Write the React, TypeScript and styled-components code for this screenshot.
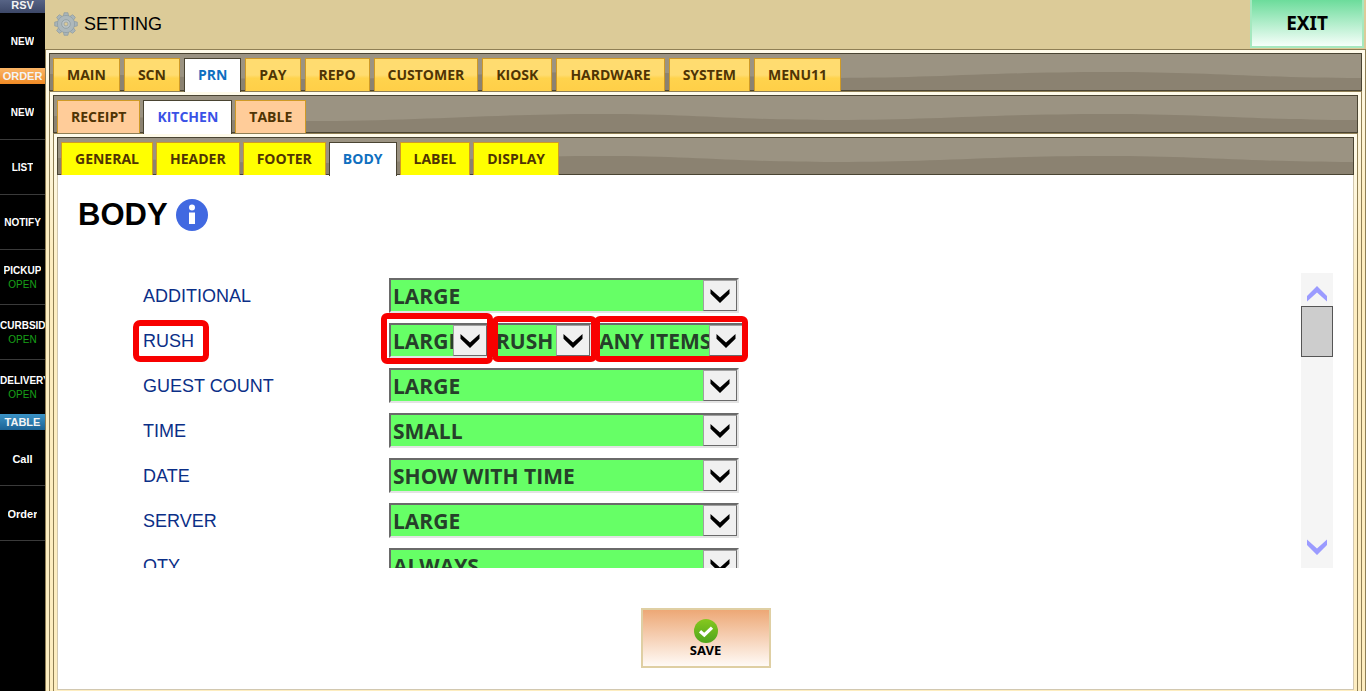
import React from "react";
import styled, { createGlobalStyle, css } from "styled-components";

const Global = createGlobalStyle`
  * { box-sizing: border-box; }
  html, body { margin: 0; height: 100%; }
  body { background: #fff; overflow: hidden; font-family: "Liberation Sans", Arial, sans-serif; color: #000; }
  #root { height: 100%; }
  button { font: inherit; cursor: pointer; }
`;

const Page = styled.div`
  display: grid;
  grid-template-columns: 45px minmax(0, 1fr);
  grid-template-rows: minmax(0, 1fr);
  height: 100%;
`;

const Sidebar = styled.nav`
  background: #000;
  overflow: hidden;
  margin-top: -3px;
`;

const headTone = {
  reserve: "linear-gradient(#5d6a8c, #3c4767)",
  order: "linear-gradient(#fbb566, #f08a24)",
  table: "linear-gradient(#3b93c6, #1b6294)",
};

const SideHead = styled.h2<{ $tone: keyof typeof headTone }>`
  margin: 0;
  height: 16px;
  font-size: 11px;
  line-height: 16px;
  font-weight: bold;
  text-align: center;
  color: #f4f4f4;
  background: ${(p) => headTone[p.$tone]};
`;

const SideItem = styled.button<{ $first?: boolean; $large?: boolean }>`
  display: flex;
  flex-direction: column;
  align-items: center;
  justify-content: center;
  width: 100%;
  height: 55px;
  padding: 1px 0 0;
  border: 0;
  border-top: 1px solid ${(p) => (p.$first ? "#000" : "#3a3a3a")};
  background: #000;
  color: #fff;
  overflow: hidden;
  && { font: bold ${(p) => (p.$large ? 11 : 10)}px/14px "Liberation Sans", Arial, sans-serif; }
`;

const SideLabel = styled.span`
  max-width: 100%;
  overflow: hidden;
  white-space: nowrap;
`;

const OpenNote = styled.span`
  color: #18a018;
  font-weight: normal;
`;

const SideEnd = styled.div`
  border-top: 1px solid #3a3a3a;
`;

const Main = styled.main`
  display: flex;
  flex-direction: column;
  min-width: 0;
  min-height: 0;
`;

const TitleBar = styled.header`
  display: flex;
  justify-content: space-between;
  height: 49px;
  flex: none;
  padding: 0 2px 0 9px;
  background: #dccb98;
`;

const Title = styled.h1`
  display: flex;
  align-items: center;
  gap: 6px;
  margin: 0;
  height: 48px;
  font-size: 18px;
  font-weight: normal;
`;

const ExitButton = styled.button`
  width: 114px;
  height: 48px;
  border: 2px solid #a6e8bf;
  border-top: 0;
  background: linear-gradient(#6cdc9b, #f6fffa);
  && { font: bold 19px/24px "Noto Sans", sans-serif; }
`;

const Frame = styled.section`
  display: flex;
  flex-direction: column;
  flex: 1;
  min-height: 0;
  padding: 3px 3px 0;
  border: 1px solid #8f7f55;
  border-bottom: 0;
  background: linear-gradient(#fffbea, #fdedc0 160px);
`;

const Strip = styled.div<{ $gap: number }>`
  position: relative;
  display: flex;
  flex: none;
  gap: ${(p) => p.$gap}px;
  height: 38px;
  padding: 4px 3px 0;
  border: 1px solid #4a4432;
  background: #8b8271;
`;

const Sheen = styled.svg`
  position: absolute;
  inset: 0;
  width: 100%;
  height: 100%;
`;

const tone = {
  gold: css`background: linear-gradient(#ffdc70 0 50%, #ffd34d 60%, #ffcf48);`,
  peach: css`background: #ffcc99;`,
  yellow: css`background: #ffff00;`,
};

const Tab = styled.button<{ $tone: keyof typeof tone; $active: boolean; $ink: string }>`
  position: relative;
  height: 33px;
  padding: 0 13px;
  border: 1px solid #cf9a26;
  border-bottom: 0;
  color: #4f3404;
  white-space: nowrap;
  ${(p) => tone[p.$tone]}
  && { font: bold 14px/32px "Open Sans", sans-serif; }
  ${(p) => p.$active && css<{ $ink: string }>`
    height: 34px;
    padding-bottom: 1px;
    background: #fff;
    border-color: #4a4432;
    color: ${(q) => q.$ink};
  `}
`;

const Content = styled.section`
  flex: 1;
  display: flex;
  flex-direction: column;
  min-height: 0;
  margin-bottom: 1px;
  padding: 19px 20px 21px;
  border: 1px solid #d2c8b0;
  border-top: 0;
  background: #fff;
`;

const Heading = styled.h2`
  display: flex;
  align-items: center;
  flex: none;
  gap: 8px;
  margin: 0;
  height: 42px;
  font-size: 31px;
  line-height: 42px;
`;

const InfoButton = styled.button`
  display: flex;
  padding: 0;
  border: 0;
  background: none;
`;

const ScrollArea = styled.div`
  flex: 1;
  display: flex;
  justify-content: space-between;
  min-height: 0;
  margin-top: 37px;
  overflow: hidden;
`;

const Rows = styled.div`
  padding-left: 61px;
`;

const Row = styled.div`
  display: grid;
  grid-template-columns: 250px 370px;
  align-items: center;
  height: 45px;
`;

const Mark = css`
  outline: 6px solid #f80000;
  border-radius: 1px;
`;

const Label = styled.label<{ $marked?: boolean }>`
  justify-self: start;
  padding: 0 9px 0 4px;
  font-size: 18px;
  line-height: 30px;
  color: #0b2f87;
  ${(p) => p.$marked && Mark}
`;

const Fields = styled.div`
  display: flex;
  gap: 3px;
`;

const SelectBox = styled.div<{ $width: number }>`
  position: relative;
  width: ${(p) => p.$width}px;
  height: 35px;
`;

const Select = styled.select`
  appearance: none;
  width: 100%;
  height: 35px;
  padding: 1px 34px 0 2px;
  border: 2px solid #6a6a6a;
  border-right-color: #e3e3e3;
  border-bottom-color: #e3e3e3;
  border-radius: 0;
  background: #66ff66;
  color: #26402a;
  overflow: hidden;
  white-space: nowrap;
  text-overflow: clip;
  font: bold 21px/30px "Open Sans", sans-serif;
`;

const Arrow = styled.span`
  position: absolute;
  top: 2px;
  right: 2px;
  display: grid;
  place-items: center;
  width: 34px;
  height: 31px;
  border: 1px solid #a0a0a0;
  border-right-color: #6a6a6a;
  border-bottom-color: #6a6a6a;
  background: #f0f0f0;
  pointer-events: none;
`;

const Highlight = styled.span<{ $inset: string }>`
  position: absolute;
  inset: ${(p) => p.$inset};
  border: 6px solid #f80000;
  border-radius: 6px;
  pointer-events: none;
`;

const ScrollBar = styled.div`
  display: flex;
  flex-direction: column;
  width: 32px;
  background: #f5f5f5;
`;

const ScrollButton = styled.button`
  display: flex;
  justify-content: center;
  align-items: center;
  height: 33px;
  padding: 8px 0 0;
  border: 0;
  background: none;
  &:last-child { padding: 0 0 10px; }
`;

const Thumb = styled.div`
  height: 51px;
  margin-bottom: auto;
  border: 1px solid #555;
  background: #cdcdcd;
`;

const Actions = styled.div`
  display: flex;
  justify-content: center;
  flex: none;
  margin-top: 40px;
`;

const SaveButton = styled.button`
  display: flex;
  flex-direction: column;
  align-items: center;
  width: 130px;
  height: 60px;
  padding: 9px 0 0;
  border: 2px solid #dfcfa3;
  background: linear-gradient(#eda876, #fffaf6);
  && { font: bold 13px/14px "Noto Sans", sans-serif; }
`;

function Gear() {
  return (
    <svg width="24" height="24" viewBox="0 0 24 24" aria-hidden="true">
      <g fill="#a9b5b9" stroke="#8d9ba0" strokeWidth="0.7">
        {[0, 45, 90, 135, 180, 225, 270, 315].map((a) => (
          <path key={a} d="M9.2 5 10.1 .7h3.8l.9 4.3z" transform={`rotate(${a} 12 12)`} />
        ))}
        <circle cx="12" cy="12" r="8.6" />
      </g>
      <circle cx="12" cy="12" r="8" fill="#adb8bb" />
      <circle cx="12" cy="12" r="4.3" fill="#bcc5c7" stroke="#8d9ba0" strokeWidth="0.8" />
      <circle cx="12" cy="12" r="2" fill="#dccb98" stroke="#8a9699" strokeWidth="0.6" />
    </svg>
  );
}

function Wave() {
  return (
    <Sheen viewBox="0 0 1300 36" preserveAspectRatio="none" aria-hidden="true">
      <path
        fill="#9b9382"
        d="M0 0H1300V24C1200 24 1150 18 1050 18C940 18 880 24 780 24C680 24 640 18 546 18C430 18 370 25 252 25C150 25 90 20 0 20Z"
      />
    </Sheen>
  );
}

function Chevron() {
  return (
    <svg width="20" height="14" viewBox="0 0 20 14" aria-hidden="true">
      <path d="M0.5 0 10 8.5 19.5 0V4.8L10 14 0.5 4.8Z" fill="#000" />
    </svg>
  );
}

function ScrollChevron({ up }: { up?: boolean }) {
  return (
    <svg width="20" height="16" viewBox="0 0 20 16" aria-hidden="true">
      <path d={up ? "M0 10 10 0 20 10V15.5L10 6.5 0 15.5Z" : "M0 .5 10 9.5 20 .5V6L10 16 0 6Z"} fill="#9b9bff" />
    </svg>
  );
}

type TabsProps = { items: string[]; active: string; tone: keyof typeof tone; ink?: string; gap?: number };

function Tabs({ items, active, tone: t, ink = "#0f6fc0", gap = 3 }: TabsProps) {
  return (
    <Strip role="tablist" $gap={gap}>
      <Wave />
      {items.map((name) => (
        <Tab key={name} role="tab" aria-selected={name === active} $tone={t} $active={name === active} $ink={ink}>
          {name}
        </Tab>
      ))}
    </Strip>
  );
}

type Field = { value: string; width: number; mark?: string };
type Setting = { label: string; fields: Field[]; marked?: boolean };

const one = (label: string, value: string): Setting => ({ label, fields: [{ value, width: 350 }] });

const settings: Setting[] = [
  one("ADDITIONAL", "LARGE"),
  {
    label: "RUSH",
    marked: true,
    fields: [
      { value: "LARGE", width: 100, mark: "-10px -4px -6px -8px" },
      { value: "RUSH", width: 100, mark: "-7px -5px -4px 0" },
      { value: "ANY ITEMS", width: 150, mark: "-7px -3px -4px -1px" },
    ],
  },
  one("GUEST COUNT", "LARGE"),
  one("TIME", "SMALL"),
  one("DATE", "SHOW WITH TIME"),
  one("SERVER", "LARGE"),
  one("QTY", "ALWAYS"),
];

function SettingRow({ label, fields, marked }: Setting) {
  return (
    <Row>
      <Label htmlFor={`${label}-0`} $marked={marked}>{label}</Label>
      <Fields>
        {fields.map((f, i) => (
          <SelectBox key={f.value} $width={f.width}>
            <Select id={`${label}-${i}`} aria-label={label} defaultValue={f.value}>
              <option>{f.value}</option>
            </Select>
            <Arrow><Chevron /></Arrow>
            {f.mark && <Highlight $inset={f.mark} />}
          </SelectBox>
        ))}
      </Fields>
    </Row>
  );
}

type EntryProps = { name: string; open?: boolean; first?: boolean; large?: boolean };

function SideEntry({ name, open, first, large }: EntryProps) {
  return (
    <SideItem $first={first} $large={large}>
      <SideLabel>{name}</SideLabel>
      {open && <OpenNote>OPEN</OpenNote>}
    </SideItem>
  );
}

export default function App() {
  return (
    <Page>
      <Global />
      <Sidebar>
        <SideHead $tone="reserve">RSV</SideHead>
        <SideEntry name="NEW" first />
        <SideHead $tone="order">ORDER</SideHead>
        <SideEntry name="NEW" first />
        <SideEntry name="LIST" />
        <SideEntry name="NOTIFY" />
        <SideEntry name="PICKUP" open />
        <SideEntry name="CURBSIDE" open />
        <SideEntry name="DELIVERY" open />
        <SideHead $tone="table">TABLE</SideHead>
        <SideEntry name="Call" first large />
        <SideEntry name="Order" large />
        <SideEnd />
      </Sidebar>
      <Main>
        <TitleBar>
          <Title><Gear />SETTING</Title>
          <ExitButton>EXIT</ExitButton>
        </TitleBar>
        <Frame>
          <Tabs
            items={["MAIN", "SCN", "PRN", "PAY", "REPO", "CUSTOMER", "KIOSK", "HARDWARE", "SYSTEM", "MENU11"]}
            active="PRN"
            tone="gold"
            gap={4}
          />
          <Frame>
            <Tabs items={["RECEIPT", "KITCHEN", "TABLE"]} active="KITCHEN" tone="peach" ink="#3a52e6" />
            <Frame>
              <Tabs items={["GENERAL", "HEADER", "FOOTER", "BODY", "LABEL", "DISPLAY"]} active="BODY" tone="yellow" />
              <Content>
                <Heading>
                  BODY
                  <InfoButton aria-label="Information">
                    <svg width="32" height="32" viewBox="0 0 32 32" aria-hidden="true">
                      <circle cx="16" cy="16" r="16" fill="#4169e1" />
                      <circle cx="16" cy="8.5" r="3" fill="#fff" />
                      <path d="M13 13.5h6V25h-6z" fill="#fff" />
                    </svg>
                  </InfoButton>
                </Heading>
                <ScrollArea>
                  <Rows>
                    {settings.map((s) => <SettingRow key={s.label} {...s} />)}
                  </Rows>
                  <ScrollBar>
                    <ScrollButton aria-label="Scroll up"><ScrollChevron up /></ScrollButton>
                    <Thumb />
                    <ScrollButton aria-label="Scroll down"><ScrollChevron /></ScrollButton>
                  </ScrollBar>
                </ScrollArea>
                <Actions>
                  <SaveButton>
                    <svg width="24" height="24" viewBox="0 0 24 24" aria-hidden="true">
                      <defs>
                        <linearGradient id="ok" x1="0" y1="0" x2="0" y2="1">
                          <stop offset="0" stopColor="#86c81e" />
                          <stop offset="1" stopColor="#4fa51c" />
                        </linearGradient>
                      </defs>
                      <circle cx="12" cy="12" r="12" fill="url(#ok)" />
                      <path d="M6 12.2 10.3 16 18 8.6" fill="none" stroke="#fff" strokeWidth="3.2" />
                    </svg>
                    SAVE
                  </SaveButton>
                </Actions>
              </Content>
            </Frame>
          </Frame>
        </Frame>
      </Main>
    </Page>
  );
}
